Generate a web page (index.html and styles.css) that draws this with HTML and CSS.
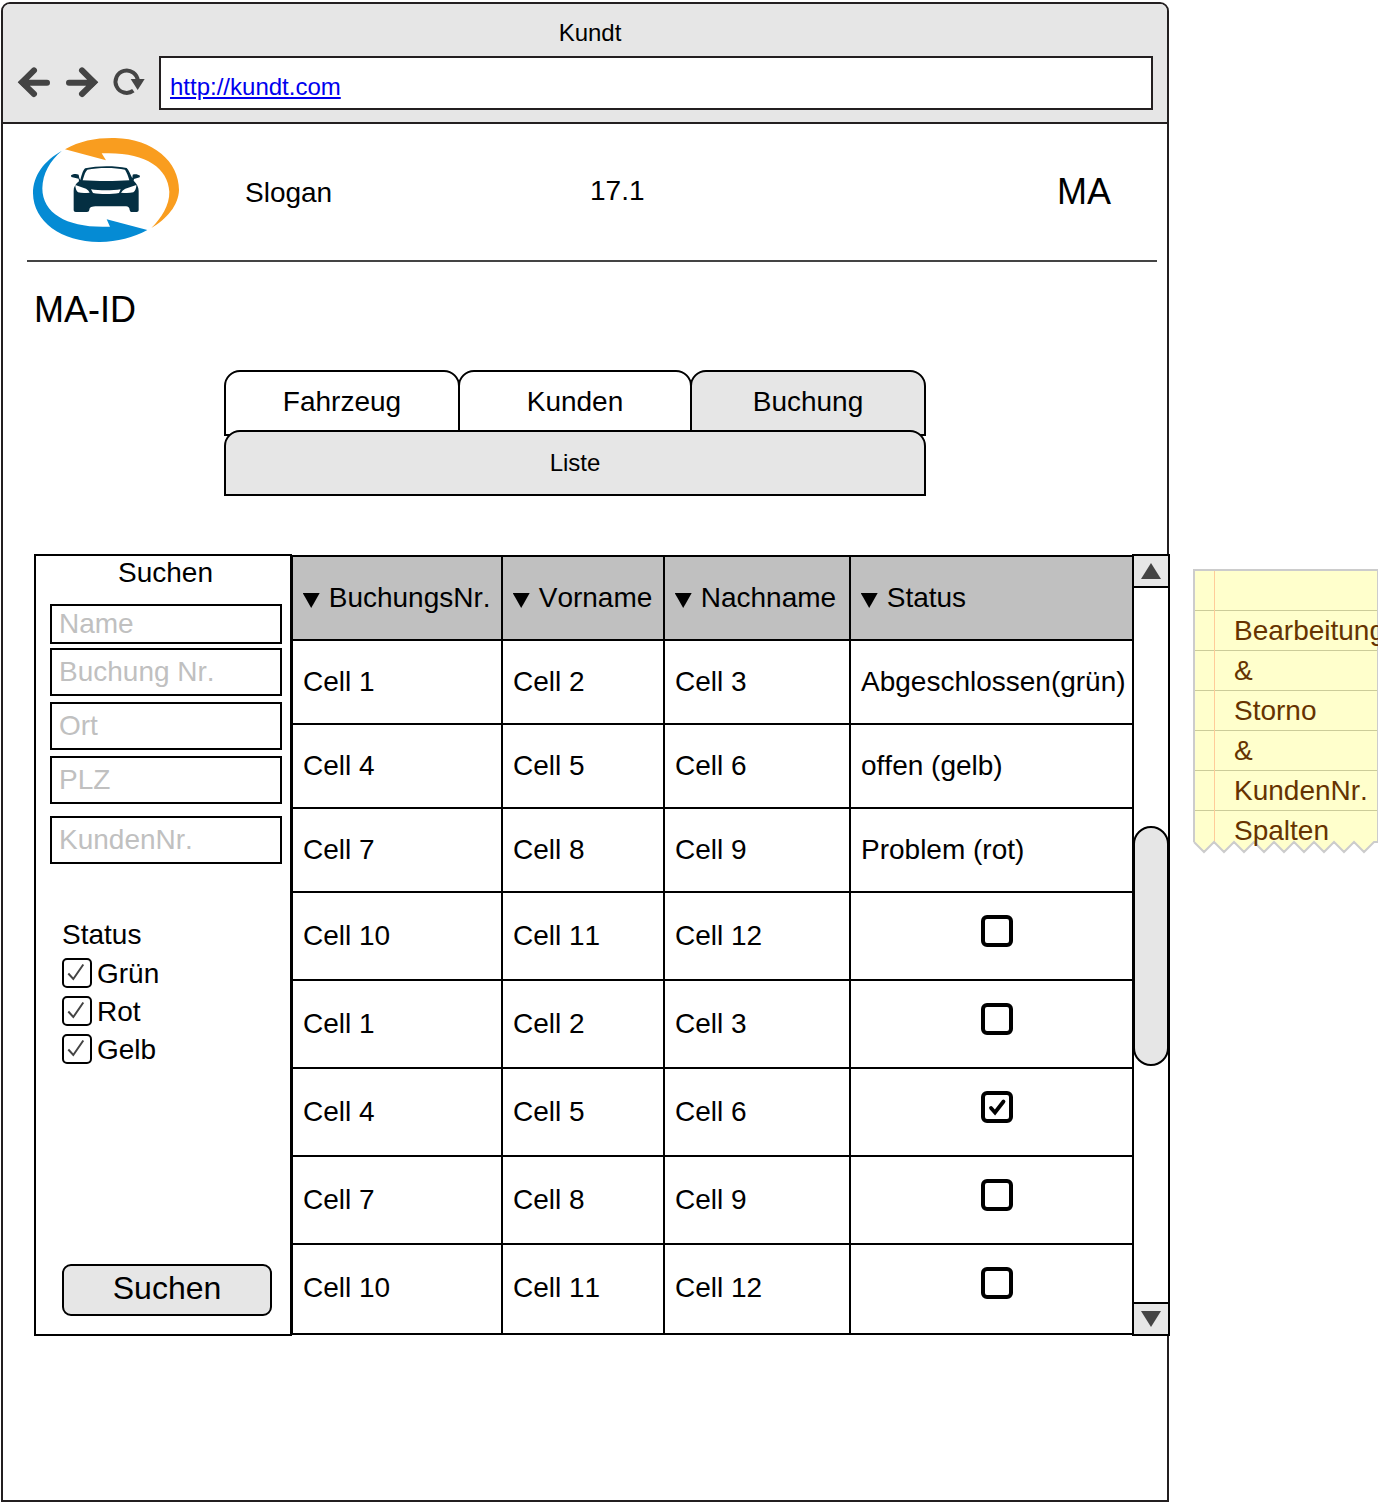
FILE: index.html
```html
<!DOCTYPE html>
<html lang="de">
<head>
<meta charset="utf-8">
<title>Kundt</title>
<link rel="stylesheet" href="styles.css">
</head>
<body>
<div class="window">
  <header class="chrome">
    <div class="chrome-title">Kundt</div>
    <div class="toolbar">
      <svg class="nav-icons" viewBox="0 0 420 162" aria-hidden="true">
        <g fill="none" stroke="#444" stroke-width="18" stroke-linecap="round">
          <path d="M60 80H132M93 43L57 79L93 114"/>
          <path d="M198 80H270M237 43L273 79L237 114"/>
        </g>
        <path fill="#444" d="M45 79L62 63V95ZM285 79L268 63V95Z"/>
        <path fill="none" stroke="#444" stroke-width="12" d="M391 104A33.500 33.500 0 1 1 404.500 75"/>
        <path fill="#444" d="M383 69H425L404 102Z"/>
      </svg>
      <div class="url"><a class="url-link" href="#">http://kundt.com</a></div>
    </div>
  </header>
  <main class="page">
    <div class="masthead">
      <svg class="logo" viewBox="0 0 510 360" role="img" aria-label="Logo">
        <path fill="#f99d1f" d="M135 58C180 32 230 23 285 24C400 27 477 95 477 180C476 225 440 268 394 294C424 264 449 225 448 185C444 110 370 64 245 70L258 91Z"/>
        <path fill="#058bd4" d="M126 62C73 92 39 135 39 190C40 275 125 337 240 336C292 335 340 323 382 300L260 268L270 290C150 296 67 255 67 175C68 130 90 92 126 62Z"/>
        <path fill="#042f42" d="M181 150C186 130 190 119 196 115C230 107 285 107 320 114C326 119 331 133 337 145L338 134C345 131 355 133 360 137L359 142L342 147L341 152C350 161 356 171 356 183V241Q356 246 350 246H334Q330 246 329 240Q328 229 318 229H226C210 230 209 234 208 240Q207 246 201 246H167Q161 246 161 241V183C160 172 167 162 177 154L176 146L154 141L153 136C160 131 170 131 176 134L178 145Z"/>
        <path fill="#fff" d="M188 151C193 133 197 123 202 119C235 112 284 112 315 119C320 126 325 140 328 151C286 154 232 154 188 151ZM166 165L198 176Q206 180 209 188Q188 191 174 187Q166 180 166 165ZM349 165L316 176Q307 180 303 188Q324 191 340 187Q349 180 349 165ZM213 178C237 182 279 182 302 178L297 189C275 193 240 193 219 189Z"/>
      </svg>
      <div class="slogan">Slogan</div>
      <div class="version">17.1</div>
      <div class="user">MA</div>
    </div>
    <h1 class="user-id">MA-ID</h1>
    <nav class="tabs">
      <div class="tab-row">
        <div class="tab">Fahrzeug</div>
        <div class="tab">Kunden</div>
        <div class="tab tab-active">Buchung</div>
      </div>
      <div class="subtab">Liste</div>
    </nav>
    <section class="listing">
      <form class="search">
        <h2 class="search-title">Suchen</h2>
        <input class="field field-name" placeholder="Name">
        <input class="field" placeholder="Buchung Nr.">
        <input class="field" placeholder="Ort">
        <input class="field" placeholder="PLZ">
        <input class="field field-customer" placeholder="KundenNr.">
        <div class="filters">
          <div class="filters-title">Status</div>
          <div class="filter"><svg class="check" viewBox="0 0 30 30"><rect x="1" y="1" width="28" height="28" rx="4"/><path d="M6.300 15.500L11.300 21L21.300 6.500"/></svg>Grün</div>
          <div class="filter"><svg class="check" viewBox="0 0 30 30"><rect x="1" y="1" width="28" height="28" rx="4"/><path d="M6.300 15.500L11.300 21L21.300 6.500"/></svg>Rot</div>
          <div class="filter"><svg class="check" viewBox="0 0 30 30"><rect x="1" y="1" width="28" height="28" rx="4"/><path d="M6.300 15.500L11.300 21L21.300 6.500"/></svg>Gelb</div>
        </div>
        <button class="search-button" type="button">Suchen</button>
      </form>
      <div class="grid">
        <div class="cell head"><i class="sort"></i>BuchungsNr.</div><div class="cell head"><i class="sort"></i>Vorname</div><div class="cell head"><i class="sort"></i>Nachname</div><div class="cell head last"><i class="sort"></i>Status</div>
        <div class="cell">Cell 1</div><div class="cell">Cell 2</div><div class="cell">Cell 3</div><div class="cell last">Abgeschlossen(grün)</div>
        <div class="cell">Cell 4</div><div class="cell">Cell 5</div><div class="cell">Cell 6</div><div class="cell last">offen (gelb)</div>
        <div class="cell">Cell 7</div><div class="cell">Cell 8</div><div class="cell">Cell 9</div><div class="cell last">Problem (rot)</div>
        <div class="cell">Cell 10</div><div class="cell">Cell 11</div><div class="cell">Cell 12</div><div class="cell last mark"><span class="box"></span></div>
        <div class="cell">Cell 1</div><div class="cell">Cell 2</div><div class="cell">Cell 3</div><div class="cell last mark"><span class="box"></span></div>
        <div class="cell">Cell 4</div><div class="cell">Cell 5</div><div class="cell">Cell 6</div><div class="cell last mark"><span class="box"><svg class="tick" viewBox="0 0 24 24"><path d="M6 13L10 17.500L18.500 6.500"/></svg></span></div>
        <div class="cell">Cell 7</div><div class="cell">Cell 8</div><div class="cell">Cell 9</div><div class="cell last mark"><span class="box"></span></div>
        <div class="cell bottom">Cell 10</div><div class="cell bottom">Cell 11</div><div class="cell bottom">Cell 12</div><div class="cell bottom last mark"><span class="box"></span></div>
      </div>
      <div class="scrollbar">
        <div class="scroll-button"><svg class="arrow" viewBox="0 0 20 16"><path d="M0 16L10 0L20 16Z"/></svg></div>
        <div class="track"><div class="thumb"></div></div>
        <div class="scroll-button scroll-down"><svg class="arrow" viewBox="0 0 20 16"><path d="M0 0H20L10 16Z"/></svg></div>
      </div>
    </section>
  </main>
</div>
<aside class="note">
  <div class="note-body">
    <div class="note-text">Bearbeitung<br>&amp;<br>Storno<br>&amp;<br>KundenNr.<br>Spalten</div>
  </div>
  <svg class="note-edge" viewBox="0 0 185 12"><path d="M1 0L11 10L21 0L31 10L41 0L51 10L61 0L71 10L81 0L91 10L101 0L111 10L121 0L131 10L141 0L151 10L161 0L171 10L181 0H185"/></svg>
</aside>
</body>
</html>
```
FILE: styles.css
```css
* { box-sizing: border-box; }

body {
  margin: 0;
  width: 1378px;
  height: 1502px;
  overflow: hidden;
  display: flex;
  align-items: flex-start;
  background: #fff;
  color: #000;
  font: 28px/32px "Liberation Sans", Arial, sans-serif;
}

.window {
  flex: none;
  width: 1168px;
  height: 1500px;
  margin: 2px 0 0 1px;
  border: 2px solid #231f20;
  border-radius: 9px 9px 0 0;
}

/* Browser chrome */
.chrome {
  height: 120px;
  background: #e6e6e6;
  border-bottom: 2px solid #231f20;
  border-radius: 7px 7px 0 0;
}
.chrome-title {
  height: 52px;
  padding-left: 10px;
  font-size: 24px;
  line-height: 58px;
  text-align: center;
}
.toolbar { display: flex; padding-right: 14px; }
.nav-icons { width: 140px; height: 54px; margin-right: 16px; overflow: visible; }
.url {
  flex: 1;
  height: 54px;
  padding: 2px 0 0 9px;
  border: 2px solid #231f20;
  background: #fff;
  font-size: 24px;
  line-height: 54px;
}
.url-link { color: #00e; }

/* Masthead */
.masthead {
  display: grid;
  grid-template-columns: 218px 345px 467px auto;
  align-items: start;
  height: 138px;
  margin: 0 10px 0 24px;
  border-bottom: 2px solid #444;
}
.logo { width: 170px; height: 120px; margin: 6px 0 0 -7px; }
.slogan { margin-top: 53px; }
.version { margin-top: 51px; }
.user { margin-top: 52px; font-size: 36px; }
.user-id {
  margin: 30px 0 0 31px;
  font-size: 36px;
  font-weight: 400;
  line-height: 36px;
}

/* Tabs */
.tabs { width: 702px; margin: 42px 0 0 221px; }
.tab-row { display: flex; height: 66px; }
.tab {
  width: 236px;
  padding-top: 14px;
  border: 2px solid #000;
  border-radius: 16px 16px 0 0;
  text-align: center;
}
.tab + .tab { width: 234px; margin-left: -2px; }
.tab + .tab-active { width: 236px; }
.tab-active { background: #e6e6e6; }
.subtab {
  position: relative;
  height: 66px;
  margin-top: -6px;
  border: 2px solid #000;
  border-radius: 16px 16px 0 0;
  background: #e6e6e6;
  font-size: 24px;
  line-height: 62px;
  text-align: center;
}

/* Listing */
.listing {
  display: flex;
  width: 1136px;
  height: 782px;
  margin: 58px 0 0 31px;
}
.search {
  flex: none;
  display: flex;
  flex-direction: column;
  width: 258px;
  padding: 0 8px 18px 14px;
  border: 2px solid #000;
}
.search-title {
  margin: 1px 1px 15px 0;
  font-size: 28px;
  font-weight: 400;
  text-align: center;
}
.field {
  width: 232px;
  height: 48px;
  margin: 0 0 6px;
  padding: 0 7px;
  border: 2px solid #000;
  border-radius: 0;
  background: #fff;
  font: inherit;
  font-kerning: none;
}
.field::placeholder { color: silver; opacity: 1; }
.field-name { height: 40px; margin-bottom: 4px; }
.field-customer { margin-top: 6px; }
.filters { margin: 49px 0 0 12px; }
.filters-title { margin-bottom: 4px; }
.filter { display: flex; align-items: center; gap: 5px; height: 38px; }
.check {
  width: 30px;
  height: 30px;
  margin-bottom: 2px;
  fill: none;
  stroke: #000;
  stroke-width: 2;
}
.check path { stroke: #444; stroke-width: 2; }
.search-button {
  width: 210px;
  height: 52px;
  margin: auto 0 0 12px;
  padding: 0 0 4px;
  border: 2px solid #000;
  border-radius: 9px;
  background: #e6e6e6;
  color: #000;
  font: 32px/40px "Liberation Sans", Arial, sans-serif;
}

.grid {
  flex: none;
  display: grid;
  grid-template-columns: 210px 162px 186px 281px;
  grid-template-rows: repeat(4, 84px) repeat(4, 88px) 90px;
  width: 841px;
  height: 780px;
  margin: 1px 0 0 -1px;
  border: solid #000;
  border-width: 2px 0 0 2px;
  font-kerning: none;
}
.cell {
  display: flex;
  align-items: center;
  padding-left: 10px;
  border: solid #000;
  border-width: 0 2px 2px 0;
  white-space: nowrap;
}
.last { border-right: 0; }
.bottom { padding-bottom: 2px; }
.head { background: silver; }
.sort {
  width: 17px;
  height: 15px;
  margin: 5px 9px 0 -0.3px;
  background: #000;
  clip-path: polygon(0 0, 100% 0, 50% 100%);
}
.mark { justify-content: center; padding: 0 0 10px 11px; }
.bottom.mark { padding-bottom: 12px; }
.box {
  width: 32px;
  height: 32px;
  border: 4px solid #000;
  border-radius: 6px;
}
.tick {
  display: block;
  width: 24px;
  height: 24px;
  fill: none;
  stroke: #000;
  stroke-width: 3.8;
  stroke-linecap: round;
}

.scrollbar {
  flex: none;
  display: flex;
  flex-direction: column;
  width: 38px;
  border: 2px solid #000;
  background: #fff;
}
.scroll-button {
  display: flex;
  justify-content: center;
  align-items: center;
  height: 32px;
  border-bottom: 2px solid #000;
  background: #e6e6e6;
}
.scroll-down { border: solid #000; border-width: 2px 0 0; }
.arrow { width: 20px; height: 16px; fill: #444; }
.track { flex: 1; padding-top: 238px; }
.thumb {
  height: 240px;
  margin: 0 -1px;
  border: 2px solid #000;
  border-radius: 18px;
  background: #e6e6e6;
}

/* Sticky note */
.note { flex: none; width: 185px; margin: 569px 0 0 24px; }
.note-body {
  height: 273px;
  padding: 40px 0 0 39px;
  border: solid #ccc;
  border-width: 2px 1px 0 2px;
  background:
    linear-gradient(#fc9, #fc9) 19px 0 / 1px 100% no-repeat,
    repeating-linear-gradient(#ffc 0 39px, #cc9 39px 40px);
}
.note-text {
  position: relative;
  z-index: 1;
  color: #630;
  line-height: 40px;
  font-kerning: none;
}
.note-edge {
  display: block;
  width: 185px;
  height: 12px;
  overflow: visible;
  fill: #ffc;
  stroke: #ccc;
  stroke-width: 2;
}
```
